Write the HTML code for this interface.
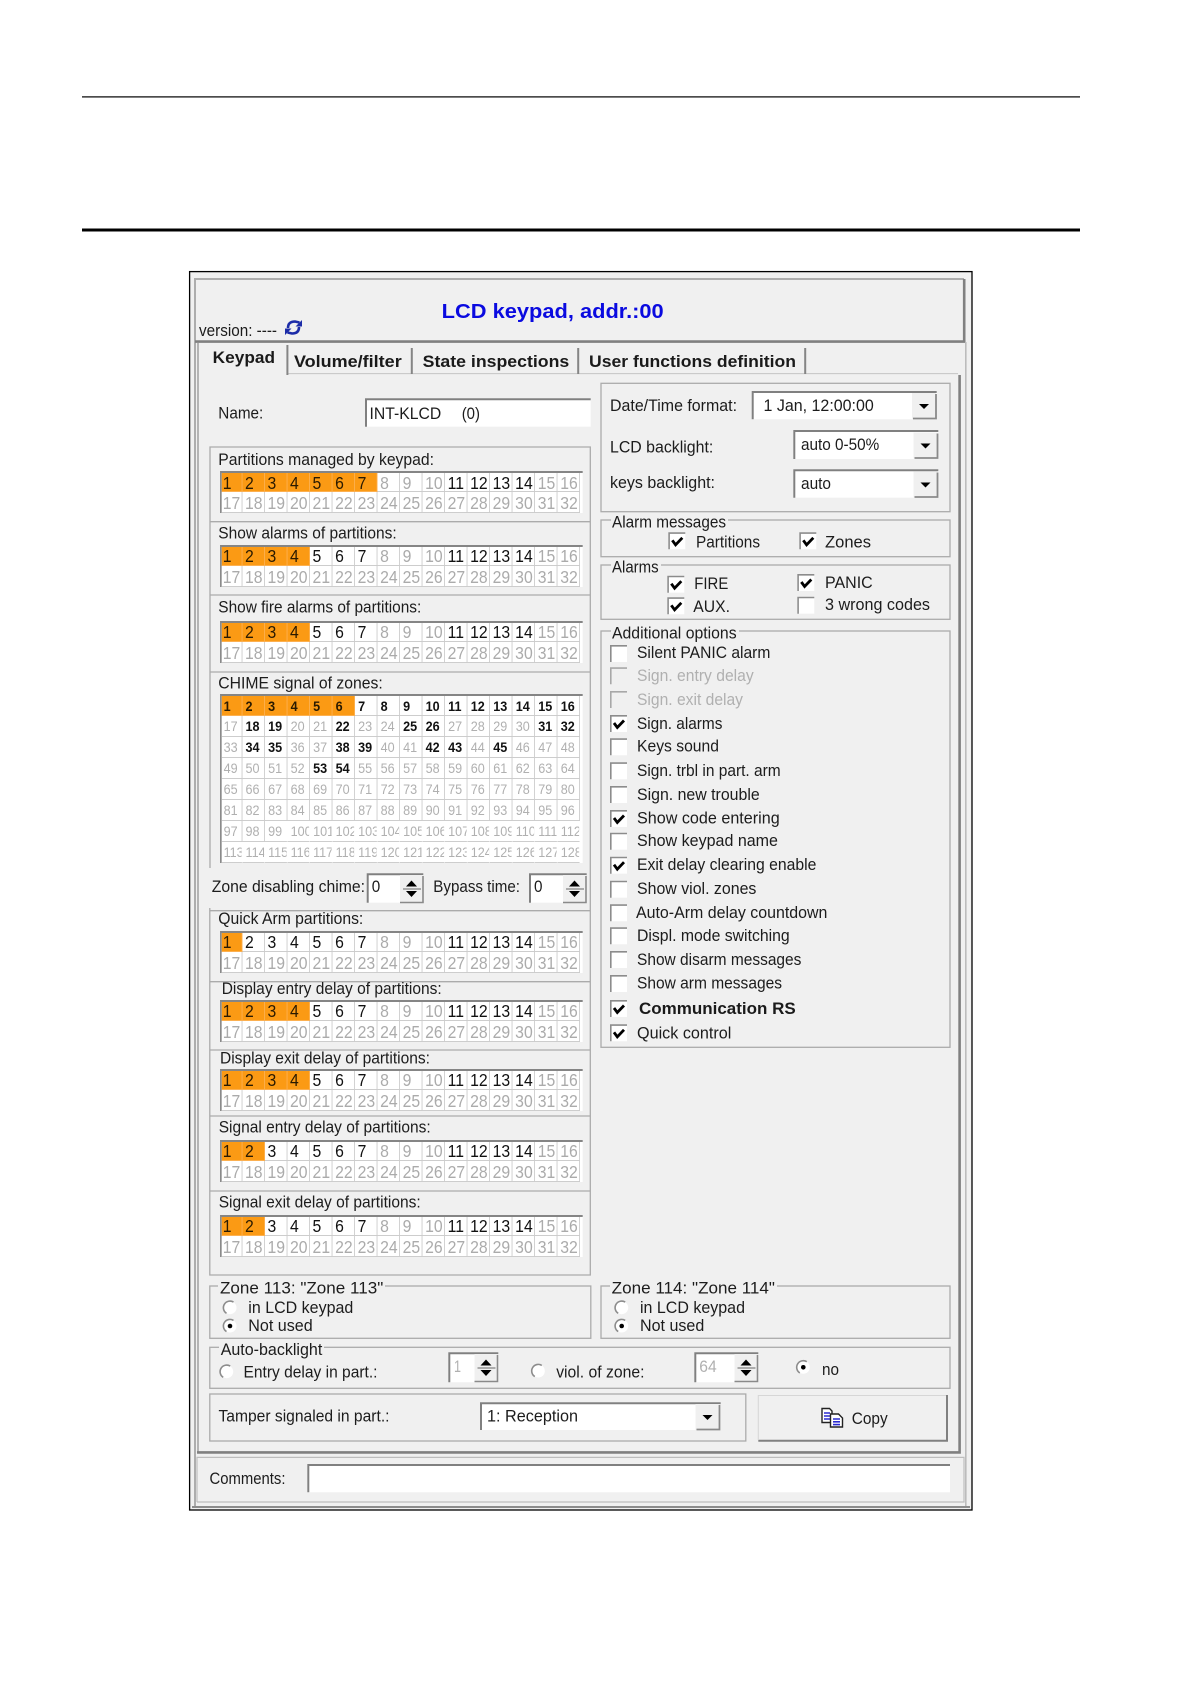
<!DOCTYPE html>
<html><head><meta charset="utf-8"><title>LCD keypad</title>
<style>
html,body{margin:0;padding:0;background:#fff}
#p{position:relative;width:1191px;height:1684px;overflow:hidden;background:#fff;filter:blur(.3px)}
svg{position:absolute;left:0;top:0}
.t{font:16.5px "Liberation Sans",sans-serif;fill:#1c1c1c;transform:translateY(-.8px)}
.d{fill:#b0b0b0}
.h{font-weight:bold;font-size:17px;fill:#1a1a1a}
.g{position:absolute;left:219.5px;width:402.7px;box-sizing:border-box;display:grid;grid-template-columns:22.8px repeat(15,25.03px);grid-template-rows:19.3px 20.8px;border-top:2.7px solid #858585;border-left:2.7px solid #8a8a8a;background:#fff;transform:scaleX(.9);transform-origin:0 0;font:17.5px/19px "Liberation Sans",sans-serif}
.g i,.g u,.g b{display:block;box-sizing:border-box;font-style:normal;text-decoration:none;font-weight:normal;overflow:hidden;white-space:nowrap;padding:2px 0 0 3px;border-right:1px solid #cdcdcd;border-bottom:1px solid #cdcdcd;background:#fff}
.g>:nth-child(-n+16){padding-top:.2px}
.a>:nth-child(-n+16){padding-top:1.5px}
.g>:nth-child(1),.g>:nth-child(17){padding-left:1px}
.g i{color:#ababab}
.g u{color:#111}
.g b{color:#2a1a00;background:#fb9a14;border-right-color:#fcb050;border-bottom-color:#fcb050}
.c{top:694px;grid-template-rows:20px repeat(7,21px);font-size:14px;line-height:19px}
.g.c>*{padding:.5px 0 0 3.6px}
.g.c>:nth-child(16n+1){padding-left:2px}
.c u,.c b{font-weight:bold}
.c i{color:#b0b0b0}
.c i:nth-child(n+99){border-right-color:transparent}
</style></head><body><div id="p">
<svg width="1191" height="1684" viewBox="0 0 1191 1684" xmlns="http://www.w3.org/2000/svg">
<defs>
<g id="cb"><rect width="17" height="17" fill="#fff"/><path d="M.8 17V.8H17" stroke="#8c8c8c" stroke-width="1.6" fill="none"/></g>
<g id="ck"><use href="#cb"/><path d="M4 8l3.300 4.500 6.700-7" stroke="#000" stroke-width="2.800" fill="none"/></g>
<g id="cd"><rect width="17" height="17" fill="#f0f0f0"/><path d="M.8 17V.8H17" stroke="#a8a8a8" stroke-width="1.6" fill="none"/></g>
<g id="r"><circle r="6.5" fill="#fff"/><path d="M3.5-5.6A6.5 6.5 0 0 0-3.5 5.6" stroke="#8c8c8c" stroke-width="1.6" fill="none"/></g>
<g id="ro"><use href="#r"/><circle r="2.3" fill="#000"/></g>
<g id="dn"><rect width="24" height="26" fill="#f0f0f0"/><path d="M1 25.500H24V1" stroke="#8a8a8a" stroke-width="1.8" fill="none"/><path d="M7 11h10l-5 5z" fill="#000"/></g>
<g id="sp"><rect width="23" height="28" fill="#f0f0f0"/><path d="M0 27.500H23V1" stroke="#8a8a8a" stroke-width="1.6" fill="none"/><path d="M6 11.500h11l-5.500-6z M6 16h11l-5.500 6z" fill="#000"/><path d="M3 14h18" stroke="#666" stroke-width="1"/></g>
</defs>

<!-- page rules -->
<rect x="82" y="96.300" width="998" height="1.200" fill="#000"/>
<rect x="82" y="228.500" width="998" height="3" fill="#000"/>

<!-- window -->
<rect x="189.600" y="271.600" width="782.400" height="1238.400" fill="#f0f0f0" stroke="#000" stroke-width="1.300"/>
<g fill="none">
<path d="M195 1506V279H964" stroke="#adadad" stroke-width="2"/>
<path d="M964.200 279V341.600H195" stroke="#808080" stroke-width="2.600"/>
<path d="M965.800 342V1506" stroke="#bcbcbc" stroke-width="1.600"/>
<path d="M192 1507H970" stroke="#8c8c8c" stroke-width="2"/>
<path d="M198 343V1452" stroke="#a4a4a4" stroke-width="1.600"/>
<path d="M287 373.600H958" stroke="#c4c4c4" stroke-width="1"/>
<path d="M959.600 375V1452.400H197" stroke="#808080" stroke-width="2.600"/>
<path d="M197 1502V1457.400H964V1502H197" stroke="#bdbdbd" stroke-width="1.200"/>
<path d="M287.400 345V375M411.800 348V374M578.200 348V374M805.200 348V374" stroke="#858585" stroke-width="2"/>
</g>

<!-- header -->
<text class="t" style="font-weight:bold;font-size:20px;fill:#0a0ae0" x="441.700" y="319" textLength="222" lengthAdjust="spacingAndGlyphs">LCD keypad, addr.:00</text>
<text class="t" x="199" y="336.700" textLength="78" lengthAdjust="spacingAndGlyphs">version: ----</text>
<path d="M288 328Q288 321.500 295 321.500L299.500 322.500M299 327Q299 333.500 292 333.500L287.500 332.500" fill="none" stroke="#1c2ca8" stroke-width="2.600"/>
<path d="M295.500 326.500H302V320zM291.500 328.500H285V335z" fill="#1c2ca8"/>

<!-- tabs -->
<text class="t h" x="212.700" y="364" textLength="62.300" lengthAdjust="spacingAndGlyphs">Keypad</text>
<text class="t h" x="294" y="368" textLength="107.700" lengthAdjust="spacingAndGlyphs">Volume/filter</text>
<text class="t h" x="422.700" y="368" textLength="146.600" lengthAdjust="spacingAndGlyphs">State inspections</text>
<text class="t h" x="589" y="368" textLength="207" lengthAdjust="spacingAndGlyphs">User functions definition</text>

<!-- name -->
<text class="t" x="218.300" y="419.300" textLength="45" lengthAdjust="spacingAndGlyphs">Name:</text>
<rect x="365" y="398.300" width="225.700" height="28.400" fill="#fff"/>
<path d="M366 426.700V399.300H590.700" fill="none" stroke="#808080" stroke-width="2"/>
<text class="t" x="369.500" y="420" textLength="71.700" lengthAdjust="spacingAndGlyphs">INT-KLCD</text>
<text class="t" x="461.700" y="420" textLength="18.300" lengthAdjust="spacingAndGlyphs">(0)</text>

<!-- left group box -->
<g fill="none" stroke="#ababab" stroke-width="1.300">
<path d="M210 868V447H590.300V1275H209.800V908"/>
<path d="M210 521.700H590M210 595H590M210 672H590M210 910.700H590M210 981.700H590M210 1050H590M210 1116H590M210 1191H590"/>
</g>
<text class="t" x="218.300" y="465.700" textLength="215.700" lengthAdjust="spacingAndGlyphs">Partitions managed by keypad:</text>
<text class="t" x="218.300" y="539.300" textLength="178.400" lengthAdjust="spacingAndGlyphs">Show alarms of partitions:</text>
<text class="t" x="218.300" y="613.500" textLength="203" lengthAdjust="spacingAndGlyphs">Show fire alarms of partitions:</text>
<text class="t" x="218.300" y="689.300" textLength="164.400" lengthAdjust="spacingAndGlyphs">CHIME signal of zones:</text>
<text class="t" x="218.300" y="925" textLength="145" lengthAdjust="spacingAndGlyphs">Quick Arm partitions:</text>
<text class="t" x="221.700" y="995" textLength="220" lengthAdjust="spacingAndGlyphs">Display entry delay of partitions:</text>
<text class="t" x="220" y="1064.300" textLength="210" lengthAdjust="spacingAndGlyphs">Display exit delay of partitions:</text>
<text class="t" x="218.700" y="1133.300" textLength="212" lengthAdjust="spacingAndGlyphs">Signal entry delay of partitions:</text>
<text class="t" x="218.700" y="1208.300" textLength="202" lengthAdjust="spacingAndGlyphs">Signal exit delay of partitions:</text>

<!-- spin row -->
<text class="t" x="211.700" y="892.700" textLength="153.300" lengthAdjust="spacingAndGlyphs">Zone disabling chime:</text>
<rect x="366.700" y="873.300" width="56.600" height="29.400" fill="#fff"/>
<path d="M367.700 902.700V874.300H423.300" fill="none" stroke="#808080" stroke-width="2"/>
<text class="t" x="371.700" y="893" textLength="8.500" lengthAdjust="spacingAndGlyphs">0</text>
<use href="#sp" x="400" y="875"/>
<text class="t" x="433.300" y="892.700" textLength="86.700" lengthAdjust="spacingAndGlyphs">Bypass time:</text>
<rect x="529" y="873.300" width="57.700" height="29.400" fill="#fff"/>
<path d="M530 902.700V874.300H586.700" fill="none" stroke="#808080" stroke-width="2"/>
<text class="t" x="534" y="893" textLength="8.500" lengthAdjust="spacingAndGlyphs">0</text>
<use href="#sp" x="563" y="875"/>

<!-- date/time box -->
<rect x="601" y="383.300" width="349" height="128.400" fill="none" stroke="#ababab" stroke-width="1.300"/>
<text class="t" x="610" y="411.700" textLength="127" lengthAdjust="spacingAndGlyphs">Date/Time format:</text>
<rect x="751.700" y="391" width="185" height="28.300" fill="#fff"/>
<path d="M752.700 419.300V392H936.700" fill="none" stroke="#808080" stroke-width="2"/>
<text class="t" x="763.500" y="411.700" textLength="110.300" lengthAdjust="spacingAndGlyphs">1 Jan, 12:00:00</text>
<use href="#dn" x="912" y="393"/>
<text class="t" x="610" y="453.300" textLength="103.300" lengthAdjust="spacingAndGlyphs">LCD backlight:</text>
<rect x="793.300" y="430" width="145" height="29" fill="#fff"/>
<path d="M794.300 459V431H938.300" fill="none" stroke="#808080" stroke-width="2"/>
<text class="t" x="801" y="450.700" textLength="78.300" lengthAdjust="spacingAndGlyphs">auto 0-50%</text>
<use href="#dn" x="913.500" y="432.500"/>
<text class="t" x="610" y="489" textLength="105" lengthAdjust="spacingAndGlyphs">keys backlight:</text>
<rect x="793.300" y="469.300" width="145" height="28.400" fill="#fff"/>
<path d="M794.300 497.700V470.300H938.300" fill="none" stroke="#808080" stroke-width="2"/>
<text class="t" x="801" y="490" textLength="30" lengthAdjust="spacingAndGlyphs">auto</text>
<use href="#dn" x="913.500" y="471.500"/>

<!-- alarm messages -->
<rect x="601" y="520" width="349" height="36.700" fill="none" stroke="#ababab" stroke-width="1.300"/>
<rect x="611" y="515" width="117" height="8" fill="#f0f0f0"/>
<text class="t" x="612" y="528.300" textLength="114" lengthAdjust="spacingAndGlyphs">Alarm messages</text>
<use href="#ck" x="668.300" y="532.300"/>
<text class="t" x="696" y="548.300" textLength="64" lengthAdjust="spacingAndGlyphs">Partitions</text>
<use href="#ck" x="799.300" y="532.300"/>
<text class="t" x="825" y="548.300" textLength="46" lengthAdjust="spacingAndGlyphs">Zones</text>

<!-- alarms -->
<rect x="601" y="565" width="349" height="54.300" fill="none" stroke="#ababab" stroke-width="1.300"/>
<rect x="611" y="560" width="50" height="8" fill="#f0f0f0"/>
<text class="t" x="612" y="573.300" textLength="46.600" lengthAdjust="spacingAndGlyphs">Alarms</text>
<use href="#ck" x="667.300" y="575.700"/>
<text class="t" x="694.300" y="590" textLength="34" lengthAdjust="spacingAndGlyphs">FIRE</text>
<use href="#ck" x="797.300" y="574"/>
<text class="t" x="825" y="589" textLength="47.700" lengthAdjust="spacingAndGlyphs">PANIC</text>
<use href="#ck" x="667.300" y="597.300"/>
<text class="t" x="693.300" y="612.700" textLength="36.700" lengthAdjust="spacingAndGlyphs">AUX.</text>
<use href="#cb" x="797.300" y="596.700"/>
<text class="t" x="825" y="611" textLength="105" lengthAdjust="spacingAndGlyphs">3 wrong codes</text>

<!-- additional options -->
<rect x="601" y="631" width="349" height="416.300" fill="none" stroke="#ababab" stroke-width="1.300"/>
<rect x="611" y="626" width="128" height="8" fill="#f0f0f0"/>
<text class="t" x="612" y="639.300" textLength="124.600" lengthAdjust="spacingAndGlyphs">Additional options</text>
<use href="#cb" x="610" y="645"/><text class="t" x="637" y="659" textLength="133.400" lengthAdjust="spacingAndGlyphs">Silent PANIC alarm</text>
<use href="#cd" x="610" y="667.300"/><text class="t d" x="637" y="681.700" textLength="116.700" lengthAdjust="spacingAndGlyphs">Sign. entry delay</text>
<use href="#cd" x="610" y="691"/><text class="t d" x="637" y="705.700" textLength="106" lengthAdjust="spacingAndGlyphs">Sign. exit delay</text>
<use href="#ck" x="610" y="715"/><text class="t" x="637" y="730" textLength="85.400" lengthAdjust="spacingAndGlyphs">Sign. alarms</text>
<use href="#cb" x="610" y="738.300"/><text class="t" x="637" y="752.300" textLength="82" lengthAdjust="spacingAndGlyphs">Keys sound</text>
<use href="#cb" x="610" y="762.300"/><text class="t" x="637" y="776.700" textLength="143.700" lengthAdjust="spacingAndGlyphs">Sign. trbl in part. arm</text>
<use href="#cb" x="610" y="786"/><text class="t" x="637" y="800.700" textLength="122.700" lengthAdjust="spacingAndGlyphs">Sign. new trouble</text>
<use href="#ck" x="610" y="810"/><text class="t" x="637" y="824.300" textLength="142.700" lengthAdjust="spacingAndGlyphs">Show code entering</text>
<use href="#cb" x="610" y="832.700"/><text class="t" x="637" y="846.700" textLength="141" lengthAdjust="spacingAndGlyphs">Show keypad name</text>
<use href="#ck" x="610" y="856.700"/><text class="t" x="637" y="871" textLength="179.400" lengthAdjust="spacingAndGlyphs">Exit delay clearing enable</text>
<use href="#cb" x="610" y="880.700"/><text class="t" x="637" y="895" textLength="119.400" lengthAdjust="spacingAndGlyphs">Show viol. zones</text>
<use href="#cb" x="610" y="904.300"/><text class="t" x="636" y="919" textLength="191.400" lengthAdjust="spacingAndGlyphs">Auto-Arm delay countdown</text>
<use href="#cb" x="610" y="927.300"/><text class="t" x="637" y="941.700" textLength="152.700" lengthAdjust="spacingAndGlyphs">Displ. mode switching</text>
<use href="#cb" x="610" y="951"/><text class="t" x="637" y="965.700" textLength="164.400" lengthAdjust="spacingAndGlyphs">Show disarm messages</text>
<use href="#cb" x="610" y="975"/><text class="t" x="637" y="989.300" textLength="145" lengthAdjust="spacingAndGlyphs">Show arm messages</text>
<use href="#ck" x="610" y="1000"/><text class="t h" x="639" y="1015" textLength="156.700" lengthAdjust="spacingAndGlyphs">Communication RS</text>
<use href="#ck" x="610" y="1024.300"/><text class="t" x="637" y="1039.300" textLength="94.400" lengthAdjust="spacingAndGlyphs">Quick control</text>

<!-- zone 113 -->
<rect x="209.800" y="1286" width="381" height="52.300" fill="none" stroke="#ababab" stroke-width="1.300"/>
<rect x="218" y="1281" width="167" height="8" fill="#f0f0f0"/>
<text class="t" x="220" y="1294.300" textLength="163.300" lengthAdjust="spacingAndGlyphs">Zone 113: "Zone 113"</text>
<use href="#r" x="230" y="1307.700"/>
<text class="t" x="248.300" y="1314" textLength="105" lengthAdjust="spacingAndGlyphs">in LCD keypad</text>
<use href="#ro" x="230" y="1326"/>
<text class="t" x="248.300" y="1331.700" textLength="64.400" lengthAdjust="spacingAndGlyphs">Not used</text>

<!-- zone 114 -->
<rect x="601" y="1286" width="349" height="52.300" fill="none" stroke="#ababab" stroke-width="1.300"/>
<rect x="610" y="1281" width="167" height="8" fill="#f0f0f0"/>
<text class="t" x="611.700" y="1294.300" textLength="163.300" lengthAdjust="spacingAndGlyphs">Zone 114: "Zone 114"</text>
<use href="#r" x="621.700" y="1307.700"/>
<text class="t" x="640" y="1314" textLength="105" lengthAdjust="spacingAndGlyphs">in LCD keypad</text>
<use href="#ro" x="621.700" y="1326"/>
<text class="t" x="640" y="1331.700" textLength="64.300" lengthAdjust="spacingAndGlyphs">Not used</text>

<!-- auto-backlight -->
<rect x="209.800" y="1347.300" width="740.200" height="41" fill="none" stroke="#ababab" stroke-width="1.300"/>
<rect x="219" y="1342" width="105" height="8" fill="#f0f0f0"/>
<text class="t" x="220.700" y="1355.700" textLength="101.600" lengthAdjust="spacingAndGlyphs">Auto-backlight</text>
<use href="#r" x="226.700" y="1371.700"/>
<text class="t" x="243.500" y="1378.300" textLength="134" lengthAdjust="spacingAndGlyphs">Entry delay in part.:</text>
<rect x="448.300" y="1352.300" width="50" height="30" fill="#fff"/>
<path d="M449.300 1382.300V1353.300H498.300" fill="none" stroke="#808080" stroke-width="2"/>
<text class="t d" x="454" y="1372.700" textLength="7" lengthAdjust="spacingAndGlyphs">1</text>
<use href="#sp" x="474.500" y="1354"/>
<use href="#r" x="538.300" y="1371"/>
<text class="t" x="556.200" y="1378.300" textLength="88.300" lengthAdjust="spacingAndGlyphs">viol. of zone:</text>
<rect x="694.300" y="1352.300" width="64" height="30" fill="#fff"/>
<path d="M695.300 1382.300V1353.300H758.300" fill="none" stroke="#808080" stroke-width="2"/>
<text class="t d" x="699.300" y="1372.700" textLength="17.400" lengthAdjust="spacingAndGlyphs">64</text>
<use href="#sp" x="734.500" y="1354"/>
<use href="#ro" x="803.300" y="1367.300"/>
<text class="t" x="822" y="1375.700" textLength="17" lengthAdjust="spacingAndGlyphs">no</text>

<!-- tamper -->
<rect x="209.800" y="1394" width="536" height="47" fill="none" stroke="#ababab" stroke-width="1.300"/>
<text class="t" x="218.500" y="1422.300" textLength="171" lengthAdjust="spacingAndGlyphs">Tamper signaled in part.:</text>
<rect x="480" y="1402.300" width="240.700" height="27.700" fill="#fff"/>
<path d="M481 1430V1403.300H720.700" fill="none" stroke="#808080" stroke-width="2"/>
<text class="t" x="487" y="1422.300" textLength="91" lengthAdjust="spacingAndGlyphs">1: Reception</text>
<use href="#dn" x="695.500" y="1404"/>

<!-- copy button -->
<rect x="758.300" y="1395" width="189" height="46" fill="#f0f0f0"/>
<path d="M758.300 1440.800H947V1395" fill="none" stroke="#808080" stroke-width="2"/>
<path d="M758.300 1440V1395.500H946" fill="none" stroke="#d6d6d6" stroke-width="1"/>
<path d="M822 1408.500h7.500l2.500 2.500v11.500h-10z" fill="#fff" stroke="#222" stroke-width="1.400"/>
<path d="M824 1413h6M824 1416h6M824 1419h6" stroke="#2a2ad0" stroke-width="1.600"/>
<path d="M830.500 1414h8l4 4v9h-12z" fill="#fff" stroke="#222" stroke-width="1.400"/>
<path d="M833 1419h7M833 1421.800h7M833 1424.600h7" stroke="#2a2ad0" stroke-width="1.600"/>
<text class="t" x="851.700" y="1425" textLength="36" lengthAdjust="spacingAndGlyphs">Copy</text>

<!-- comments -->
<text class="t" x="209.500" y="1485" textLength="76" lengthAdjust="spacingAndGlyphs">Comments:</text>
<rect x="307.300" y="1464" width="642.700" height="28.300" fill="#fff"/>
<path d="M308.300 1492.300V1465H950" fill="none" stroke="#808080" stroke-width="2"/>
</svg>

<div class="g a" style="top:470.7px"><b>1</b><b>2</b><b>3</b><b>4</b><b>5</b><b>6</b><b>7</b><i>8</i><i>9</i><i>10</i><u>11</u><u>12</u><u>13</u><u>14</u><i>15</i><i>16</i><i>17</i><i>18</i><i>19</i><i>20</i><i>21</i><i>22</i><i>23</i><i>24</i><i>25</i><i>26</i><i>27</i><i>28</i><i>29</i><i>30</i><i>31</i><i>32</i></div>
<div class="g" style="top:545px"><b>1</b><b>2</b><b>3</b><b>4</b><u>5</u><u>6</u><u>7</u><i>8</i><i>9</i><i>10</i><u>11</u><u>12</u><u>13</u><u>14</u><i>15</i><i>16</i><i>17</i><i>18</i><i>19</i><i>20</i><i>21</i><i>22</i><i>23</i><i>24</i><i>25</i><i>26</i><i>27</i><i>28</i><i>29</i><i>30</i><i>31</i><i>32</i></div>
<div class="g" style="top:620.5px"><b>1</b><b>2</b><b>3</b><b>4</b><u>5</u><u>6</u><u>7</u><i>8</i><i>9</i><i>10</i><u>11</u><u>12</u><u>13</u><u>14</u><i>15</i><i>16</i><i>17</i><i>18</i><i>19</i><i>20</i><i>21</i><i>22</i><i>23</i><i>24</i><i>25</i><i>26</i><i>27</i><i>28</i><i>29</i><i>30</i><i>31</i><i>32</i></div>
<div class="g c"><b>1</b><b>2</b><b>3</b><b>4</b><b>5</b><b>6</b><u>7</u><u>8</u><u>9</u><u>10</u><u>11</u><u>12</u><u>13</u><u>14</u><u>15</u><u>16</u><i>17</i><u>18</u><u>19</u><i>20</i><i>21</i><u>22</u><i>23</i><i>24</i><u>25</u><u>26</u><i>27</i><i>28</i><i>29</i><i>30</i><u>31</u><u>32</u><i>33</i><u>34</u><u>35</u><i>36</i><i>37</i><u>38</u><u>39</u><i>40</i><i>41</i><u>42</u><u>43</u><i>44</i><u>45</u><i>46</i><i>47</i><i>48</i><i>49</i><i>50</i><i>51</i><i>52</i><u>53</u><u>54</u><i>55</i><i>56</i><i>57</i><i>58</i><i>59</i><i>60</i><i>61</i><i>62</i><i>63</i><i>64</i><i>65</i><i>66</i><i>67</i><i>68</i><i>69</i><i>70</i><i>71</i><i>72</i><i>73</i><i>74</i><i>75</i><i>76</i><i>77</i><i>78</i><i>79</i><i>80</i><i>81</i><i>82</i><i>83</i><i>84</i><i>85</i><i>86</i><i>87</i><i>88</i><i>89</i><i>90</i><i>91</i><i>92</i><i>93</i><i>94</i><i>95</i><i>96</i><i>97</i><i>98</i><i>99</i><i>100</i><i>101</i><i>102</i><i>103</i><i>104</i><i>105</i><i>106</i><i>107</i><i>108</i><i>109</i><i>110</i><i>111</i><i>112</i><i>113</i><i>114</i><i>115</i><i>116</i><i>117</i><i>118</i><i>119</i><i>120</i><i>121</i><i>122</i><i>123</i><i>124</i><i>125</i><i>126</i><i>127</i><i>128</i></div>
<div class="g" style="top:931px"><b>1</b><u>2</u><u>3</u><u>4</u><u>5</u><u>6</u><u>7</u><i>8</i><i>9</i><i>10</i><u>11</u><u>12</u><u>13</u><u>14</u><i>15</i><i>16</i><i>17</i><i>18</i><i>19</i><i>20</i><i>21</i><i>22</i><i>23</i><i>24</i><i>25</i><i>26</i><i>27</i><i>28</i><i>29</i><i>30</i><i>31</i><i>32</i></div>
<div class="g" style="top:1000px"><b>1</b><b>2</b><b>3</b><b>4</b><u>5</u><u>6</u><u>7</u><i>8</i><i>9</i><i>10</i><u>11</u><u>12</u><u>13</u><u>14</u><i>15</i><i>16</i><i>17</i><i>18</i><i>19</i><i>20</i><i>21</i><i>22</i><i>23</i><i>24</i><i>25</i><i>26</i><i>27</i><i>28</i><i>29</i><i>30</i><i>31</i><i>32</i></div>
<div class="g" style="top:1069px"><b>1</b><b>2</b><b>3</b><b>4</b><u>5</u><u>6</u><u>7</u><i>8</i><i>9</i><i>10</i><u>11</u><u>12</u><u>13</u><u>14</u><i>15</i><i>16</i><i>17</i><i>18</i><i>19</i><i>20</i><i>21</i><i>22</i><i>23</i><i>24</i><i>25</i><i>26</i><i>27</i><i>28</i><i>29</i><i>30</i><i>31</i><i>32</i></div>
<div class="g" style="top:1140px"><b>1</b><b>2</b><u>3</u><u>4</u><u>5</u><u>6</u><u>7</u><i>8</i><i>9</i><i>10</i><u>11</u><u>12</u><u>13</u><u>14</u><i>15</i><i>16</i><i>17</i><i>18</i><i>19</i><i>20</i><i>21</i><i>22</i><i>23</i><i>24</i><i>25</i><i>26</i><i>27</i><i>28</i><i>29</i><i>30</i><i>31</i><i>32</i></div>
<div class="g" style="top:1215px"><b>1</b><b>2</b><u>3</u><u>4</u><u>5</u><u>6</u><u>7</u><i>8</i><i>9</i><i>10</i><u>11</u><u>12</u><u>13</u><u>14</u><i>15</i><i>16</i><i>17</i><i>18</i><i>19</i><i>20</i><i>21</i><i>22</i><i>23</i><i>24</i><i>25</i><i>26</i><i>27</i><i>28</i><i>29</i><i>30</i><i>31</i><i>32</i></div>
</div></body></html>
